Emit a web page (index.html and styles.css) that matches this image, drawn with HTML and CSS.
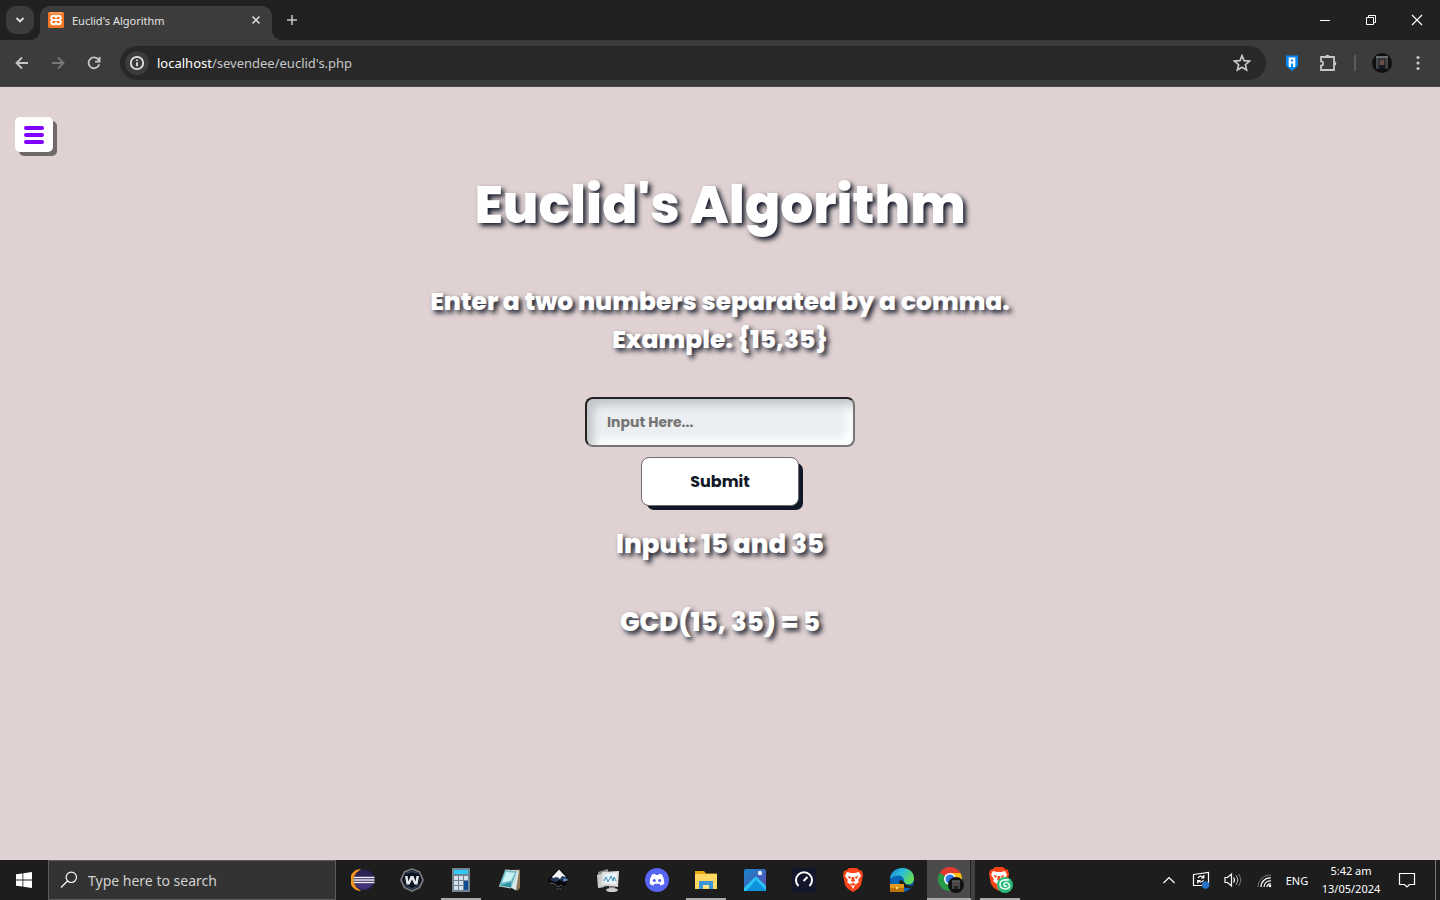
FILE: index.html
```html
<!DOCTYPE html>
<html lang="en">
<head>
<meta charset="utf-8">
<title>Euclid's Algorithm</title>
<link rel="stylesheet" href="styles.css">
</head>
<body>
<header class="browser">
  <div class="tabstrip">
    <button class="tab-search" aria-label="Search tabs"><svg width="10" height="10" viewBox="0 0 10 10"><path d="M1.500 3L5 6.500 8.500 3" class="stroke"/></svg></button>
    <div class="tab">
      <svg width="16" height="16" viewBox="0 0 16 16"><rect width="16" height="16" rx="1.500" fill="#f37623"/><path d="M1 1h14" stroke="#fbb27f"/><path d="M5.300 3.800h1.400L8 5.200l1.300-1.400h1.400a2 2 0 0 1 2 2v.7L11.500 8l1.200 1.500v.7a2 2 0 0 1-2 2H9.300L8 10.800l-1.300 1.400H5.300a2 2 0 0 1-2-2v-.7L4.500 8 3.300 6.500v-.7a2 2 0 0 1 2-2zM5.500 8h5" fill="none" stroke="#fff" stroke-width="2"/><path d="M6 5.500v1M10 5.500v1M6 9.500v1M10 9.500v1" stroke="#f37623" stroke-width="1.500"/></svg>
      <span class="tab-title">Euclid's Algorithm</span>
      <button class="tab-close" aria-label="Close tab"><svg width="10" height="10" viewBox="0 0 10 10"><path d="M1.500 1.500l7 7M8.500 1.500l-7 7" class="thin"/></svg></button>
    </div>
    <button class="new-tab" aria-label="New tab"><svg width="12" height="12" viewBox="0 0 12 12"><path d="M6 1v10M1 6h10" class="thin"/></svg></button>
    <div class="window-controls">
      <button aria-label="Minimise"><svg width="12" height="12" viewBox="0 0 12 12"><path d="M1 6.500h10" stroke="#fff"/></svg></button>
      <button aria-label="Restore"><svg width="12" height="12" viewBox="0 0 12 12"><path d="M1.500 3.500h7v7h-7zM3.500 3.500v-2h7v7h-2" fill="none" stroke="#fff"/></svg></button>
      <button aria-label="Close"><svg width="12" height="12" viewBox="0 0 12 12"><path d="M1 1l10 10M11 1L1 11" stroke="#fff" stroke-width="1.200"/></svg></button>
    </div>
  </div>
  <div class="toolbar">
    <button class="nav" aria-label="Back"><svg width="16" height="16" viewBox="0 0 16 16"><path d="M14 8H3M8 2.500L2.500 8 8 13.500" class="stroke"/></svg></button>
    <button class="nav dim" aria-label="Forward"><svg width="16" height="16" viewBox="0 0 16 16"><path d="M2 8h11M8 2.500L13.500 8 8 13.500" class="stroke"/></svg></button>
    <button class="nav" aria-label="Reload"><svg width="16" height="16" viewBox="0 0 16 16"><path d="M13.200 9.200A5.400 5.400 0 1 1 12.600 5L13.500 6.200M13.600 2v4.600H9" class="stroke"/></svg></button>
    <div class="omnibox">
      <button class="site-info" aria-label="Site information"><svg width="16" height="16" viewBox="0 0 16 16"><circle cx="8" cy="8" r="6.200" class="stroke"/><path d="M8 7.200v4M8 4.500v1.600" class="stroke"/></svg></button>
      <div class="url"><span class="host">localhost</span>/sevendee/euclid's.php</div>
      <button class="star" aria-label="Bookmark"><svg width="18" height="18" viewBox="0 0 16 16"><path d="M8 1.500l1.800 4.400 4.900.4-3.700 3.200 1.100 4.800L8 11.800l-4.100 2.500L5 9.500 1.300 6.300l4.900-.4z" class="thin"/></svg></button>
    </div>
    <button class="tool" aria-label="Password extension"><svg width="16" height="18" viewBox="0 0 16 18"><path d="M2 1.500h12v10.500l-6 5-6-5z" fill="#0789f1"/><path d="M5.800 13V4.500h4.400V13M5.500 8.500h5" fill="none" stroke="#fff" stroke-width="2.200"/></svg></button>
    <button class="tool" aria-label="Extensions"><svg width="18" height="18" viewBox="0 0 18 18"><path d="M2 3h13v13H2v-4.300a2.200 2.200 0 0 0 0-4.400z" class="stroke"/><path d="M6.200 3a2.300 2.300 0 0 1 4.600 0zM15 7.200a2.300 2.300 0 0 1 0 4.600z" fill="currentColor"/></svg></button>
    <span class="divider"></span>
    <button class="profile" aria-label="Profile"><svg width="20" height="20" viewBox="0 0 20 20"><circle cx="10" cy="10" r="10" fill="#101010"/><path d="M4 4h12v12H4z" fill="#303437"/><path d="M4 4h12" stroke="#85888a" stroke-width="1.500"/><path d="M5 5v10M15 5v10" stroke="#5b5e60"/><path d="M8 7h4v5H8z" fill="#684b43"/><path d="M7 12h6v4H7z" fill="#171b21"/></svg></button>
    <button class="menu" aria-label="Browser menu"><svg width="4" height="16" viewBox="0 0 4 16"><circle cx="2" cy="2.500" r="1.600"/><circle cx="2" cy="8" r="1.600"/><circle cx="2" cy="13.500" r="1.600"/></svg></button>
  </div>
</header>

<main class="page">
  <button class="hamburger" aria-label="Open menu"><span></span><span></span><span></span></button>
  <h1 class="title">Euclid's Algorithm</h1>
  <form class="calculator" onsubmit="return false">
    <label class="prompt" for="numbers">Enter a two numbers separated by a comma.<br>Example: {15,35}</label>
    <input class="numbers" id="numbers" type="text" placeholder="Input Here...">
    <button class="submit" type="submit">Submit</button>
  </form>
  <p class="result">Input: 15 and 35</p>
  <p class="result">GCD(15, 35) = 5</p>
</main>

<footer class="taskbar">
  <button class="start" aria-label="Start"><svg width="16" height="16" viewBox="0 0 16 16" fill="#fff"><path d="M0 2.300l6.500-.9v6.200H0zM7.300 1.300L16 0v7.600H7.300zM0 8.400h6.500v6.200L0 13.700zM7.300 8.400H16V16l-8.700-1.200z"/></svg></button>
  <label class="search" for="search"><svg width="18" height="18" viewBox="0 0 18 18"><circle cx="11.300" cy="6.300" r="5.200" class="white"/><path d="M7.500 10L1 16.500" class="white"/></svg><input id="search" type="text" placeholder="Type here to search"></label>
  <nav class="apps" aria-label="Applications">
    <button aria-label="Eclipse"><svg width="24" height="24" viewBox="0 0 24 24"><path d="M10 1a11 11 0 0 0 0 22A14 14 0 0 1 10 1z" fill="#f7941e"/><circle cx="13" cy="12" r="10.500" fill="#2c2255"/><path d="M4 16h18a10.500 10.500 0 0 1-18 0z" fill="#44337a"/><path d="M3 9.500h20.500M2.500 12h21M3 14.500h20.500" stroke="#eeeaf6" stroke-width="1.300"/></svg></button>
    <button aria-label="Wallpaper app"><svg width="24" height="24" viewBox="0 0 24 24"><path d="M12 1l7.500 3L23 12l-3.500 7.500L12 23l-7.500-3.500L1 12l3.500-8z" fill="#0c1420" stroke="#74777c" stroke-width="1.800"/><path d="M5.500 5.500L12 3.500l6.500 2M5 17l7 4 7-4" fill="none" stroke="#354660" stroke-width="1.300"/><path d="M5 8h2.500l1 5.500L10.500 8h3l2 5.500 1-5.500H19l-1.500 8.500h-3L12 11.500l-2.500 5h-3z" fill="#e5e8ed"/></svg></button>
    <button class="running" aria-label="Calculator"><svg width="18" height="24" viewBox="0 0 18 24"><path d="M0 0h18v24H0z" fill="#728493"/><path d="M2 2h14v4H2z" fill="#31c9f6"/><path d="M2 8h4v4H2zM7 8h4v4H7zM12 8h4v4h-4zM2 13h4v4H2zM7 13h4v4H7zM2 18h4v4H2zM7 18h4v4H7z" fill="#d6e0e8"/><path d="M12 13h4v9h-4z" fill="#124d93"/></svg></button>
    <button aria-label="Notepad"><svg width="24" height="24" viewBox="0 0 24 24"><path d="M7 2l15-.5V20l-3 3z" fill="#8f7654"/><path d="M7 2l14 .5-3 20-7-4z" fill="#d5e7e8"/><path d="M7 2l12 1-6 17-12-2z" fill="#69bbc7"/><path d="M8 4l9 .7-4 8-9 2z" fill="#c8f1f2"/><path d="M1 18l12-4v6z" fill="#2e929d"/><path d="M7 2l12 1M1 18l12 2" stroke="#c4c9c7"/></svg></button>
    <button aria-label="Inkscape"><svg width="24" height="24" viewBox="0 0 24 24"><path d="M12 1q2 0 9 9 3 3-1 4l-3 2h3l-3 2-2-1-1 3 3 1-5 2-5-2 3-1-1-2-4-1 1-2-4-1q-3-1 1-4 7-9 9-9z" fill="#07080a"/><path d="M12 2L21 11l-5 2-4-1-3 2-6-2z" fill="#263c61"/><path d="M12 1.500l7 7.500-4-1-2 3-3-2-4 1-1-1z" fill="#f4f4f4"/><path d="M17 10l5 2-6 2z" fill="#6689bd"/><path d="M3 15l5 1 3 3 4-2M9 21h6" fill="none" stroke="#5e6165"/></svg></button>
    <button aria-label="System monitor"><svg width="24" height="24" viewBox="0 0 24 24"><path d="M2 4l10-3v17L3 20z" fill="#87908e"/><path d="M1 7l7-2v14l-6 1z" fill="#c9ccc9"/><path d="M6 4l17-1-1 16-17-2z" fill="#ddd"/><path d="M8 6l13-1-1 11-12-1z" fill="#eaf5fa"/><path d="M8 13l2-4 2 5 3-6 2 5 1-4 2 4" fill="none" stroke="#388bb8"/><path d="M13 18l6 1v2H13z" fill="#888"/><ellipse cx="16" cy="22" rx="6" ry="2" fill="#cfcfcf"/></svg></button>
    <button aria-label="Discord"><svg width="24" height="24" viewBox="0 0 24 24"><circle cx="12" cy="12" r="12" fill="#5865f2"/><path d="M7 6.500l3-.8.800 1.200h2.400l.8-1.200 3 .8q2.500 4 2.300 9.200-2 1.500-3.800 1.700l-1-1.700h-5l-1 1.700q-2-.2-3.800-1.700Q4.500 10.500 7 6.500z" fill="#fff"/><circle cx="9.300" cy="12.500" r="1.600" fill="#5865f2"/><circle cx="14.700" cy="12.500" r="1.600" fill="#5865f2"/></svg></button>
    <button class="running" aria-label="File Explorer"><svg width="24" height="24" viewBox="0 0 24 24"><path d="M1 3h9l2 2.500h11V20H1z" fill="#e8a713"/><path d="M1 6h22v15H1z" fill="#ffd763"/><path d="M5 13h14v8h-4v-4H9v4H5z" fill="#3b95d8"/><path d="M9 17h6v3H9z" fill="#ffe58a"/></svg></button>
    <button aria-label="Photos"><svg width="24" height="24" viewBox="0 0 24 24"><defs><linearGradient id="photo" x2="1" y2="1"><stop stop-color="#1685cc"/><stop offset="1" stop-color="#634cae"/></linearGradient></defs><rect x="1" y="1" width="22" height="22" rx="2" fill="url(#photo)"/><path d="M1 20L11 10q2-2 4 0l8 8v5H1z" fill="#29c6f5"/><path d="M13 12l10 10v1H3z" fill="#0f93dc"/><circle cx="17" cy="5" r="2.200" fill="#e1edff"/></svg></button>
    <button aria-label="Speedtest"><svg width="24" height="24" viewBox="0 0 24 24"><path d="M0 0h24v24H0z" fill="#14162b"/><path d="M6.500 18a8 8 0 1 1 11 0M11.500 13l4-4" fill="none" stroke="#fff" stroke-width="2"/></svg></button>
    <button aria-label="Brave"><svg width="24" height="24" viewBox="0 0 24 24"><path d="M8 0h8l2 2 3 1 1 4-2 10-3 4-5 3-5-3-3-4L2 7l1-4 3-1z" fill="#fa451b"/><path d="M6 4l4 1h4l4-1 2 4-3 4 1 2-4 3-2 4-2-4-4-3 1-2-3-4z" fill="#fff"/><path d="M6.500 8l4 1-2 2zM17.500 8l-4 1 2 2zM11 9h2l1 4-2 1-2-1zM9 16l3-1 3 1-3 2z" fill="#fa451b"/></svg></button>
    <button aria-label="Edge"><svg width="24" height="24" viewBox="0 0 24 24"><defs><linearGradient id="edge" x2="1" y2=".5"><stop stop-color="#1781ce"/><stop offset=".5" stop-color="#29bddc"/><stop offset="1" stop-color="#66dc58"/></linearGradient></defs><circle cx="12" cy="12" r="12" fill="#0b65b4"/><path d="M0 11C1-4 24-3 24 10c0 7-8 8-10 4 1-5-5-10-14-3z" fill="url(#edge)"/><path d="M14 14q-4-4-5 0 2 7 12 6l2-3q-6 2-9-3z" fill="#202020"/><path d="M0 16h14v8H0z" fill="#bd710a"/><path d="M0 16h14v4H0z" fill="#e49b1b"/><path d="M6 19h2v2H6z" fill="#ffe092"/></svg></button>
    <button class="active" aria-label="Chrome"><svg width="26" height="26" viewBox="0 0 26 26"><path d="M12 12L1.600 6A12 12 0 0 1 22.400 6z" fill="#e33b2e"/><path d="M12 12L1.600 6A12 12 0 0 0 12 24z" fill="#279b48"/><path d="M12 12h12A12 12 0 0 1 12 24z" fill="#fbc116"/><path d="M12 6h10.400A12 12 0 0 1 24 12H12z" fill="#fbc116"/><circle cx="12" cy="12" r="6" fill="#fff"/><circle cx="12" cy="12" r="4.500" fill="#3477e6"/><circle cx="18" cy="18" r="8" fill="#111"/><path d="M14 14h8v8h-8z" fill="#44484b"/><path d="M14 14h8" stroke="#777"/><path d="M16 16h4v3h-4z" fill="#5b463f"/><path d="M16 19h4v3h-4z" fill="#202226"/></svg></button>
    <button class="running" aria-label="Brave profile"><svg width="26" height="26" viewBox="0 0 26 26"><path d="M8 0h8l2 2 3 1 1 4-2 10-3 4-5 3-5-3-3-4L2 7l1-4 3-1z" fill="#fa451b"/><path d="M6 4l4 1h4l4-1 2 4-3 4 1 2-4 3-2 4-2-4-4-3 1-2-3-4z" fill="#fff"/><path d="M6.500 8l4 1-2 2zM17.500 8l-4 1 2 2zM11 9h2l1 4-2 1-2-1z" fill="#fa451b"/><circle cx="18" cy="18" r="8" fill="#2cb77b"/><path d="M22 13q-9-1-9 4t6 5q5-1 3-5-3-3-5 0 0 3 3 2" fill="none" stroke="#e0ffef" stroke-width="1.600"/></svg></button>
  </nav>
  <div class="tray">
    <button aria-label="Show hidden icons"><svg width="14" height="10" viewBox="0 0 14 10"><path d="M1.500 8L7 2.500 12.500 8" class="white"/></svg></button>
    <button aria-label="Sync status"><svg width="18" height="18" viewBox="0 0 18 18"><path d="M1.500 3.500L16.500 1.500v13h-15z" class="white"/><path d="M6 7q2.500-3.500 5.500-.5M11.800 4v3H9M11.500 9q-2.500 3.500-5.500.7M5.700 12.500v-3h2.800" class="white"/><circle cx="13.500" cy="14" r="3.700" fill="#2875c7"/></svg></button>
    <button aria-label="Volume"><svg width="18" height="16" viewBox="0 0 18 16"><path d="M1 5.500h2.500L7.500 2v12l-4-3.500H1zM9.500 5.500q2 2.500 0 5" class="white"/><path d="M12 3.500q3.500 4.500 0 9" fill="none" stroke="#bbb"/><path d="M14.500 2q4.500 6 0 12" fill="none" stroke="#777"/></svg></button>
    <button aria-label="Network"><svg width="16" height="16" viewBox="0 0 16 16"><path d="M1 15A12 12 0 0 1 14 3" fill="none" stroke="#777"/><path d="M4 15A9 9 0 0 1 14 6M7 15a6 6 0 0 1 7-6M10 15a3 3 0 0 1 4-3" class="white"/><circle cx="13" cy="14" r="1.300" fill="#fff"/></svg></button>
    <button class="language">ENG</button>
    <button class="clock"><time datetime="2024-05-13T05:42">5:42 am<br>13/05/2024</time></button>
    <button class="notifications" aria-label="Notifications"><svg width="18" height="18" viewBox="0 0 18 18"><path d="M1.500 2.500h15v11h-5L9 16l-2.500-2.500h-5z" class="white"/></svg></button>
    <button class="desktop" aria-label="Show desktop"></button>
  </div>
</footer>
</body>
</html>
```
FILE: styles.css
```css
* { box-sizing: border-box; }
body {
  margin: 0;
  min-height: 100vh;
  display: flex;
  flex-direction: column;
  background: #e0d2d2;
  font-family: "Noto Sans", "Open Sans", sans-serif;
  font-size: 12px;
}
button {
  display: flex;
  align-items: center;
  justify-content: center;
  flex: none;
  padding: 0;
  border: 0;
  background: none;
  color: inherit;
  font: inherit;
}
svg { display: block; flex: none; }
.stroke, .thin { fill: none; stroke: currentColor; stroke-width: 1.8; }
.thin { stroke-width: 1.5; }
.white { fill: none; stroke: #fff; stroke-width: 1.2; }

.browser { background: #3c3c3c; color: #c7c7c7; }
.tabstrip { display: flex; height: 40px; padding-left: 6px; background: #202221; }
.tab-search { width: 28px; height: 28px; margin-top: 6px; border-radius: 10px; background: #3c3c3c; color: #e3e3e3; }
.tab {
  display: flex;
  align-items: center;
  gap: 8px;
  position: relative;
  width: 232px;
  height: 34px;
  margin: 6px 0 0 6px;
  padding: 0 8px 6px;
  border-radius: 10px 10px 0 0;
  background: #3c3c3c;
  color: #e3e3e3;
}
.tab::before, .tab::after {
  content: "";
  position: absolute;
  bottom: 0;
  width: 10px;
  height: 10px;
}
.tab::before { right: 100%; background: radial-gradient(circle at 0 0, #202221 10px, #3c3c3c 10px); }
.tab::after { left: 100%; background: radial-gradient(circle at 100% 0, #202221 10px, #3c3c3c 10px); }
.tab-title { flex: 1; font-size: 11px; }
.tab-close { width: 16px; height: 16px; }
.new-tab { width: 28px; height: 28px; margin: 6px 0 0 6px; }
.window-controls { display: flex; margin-left: auto; }
.window-controls button { width: 46px; height: 40px; }
.toolbar {
  display: flex;
  align-items: center;
  height: 47px;
  padding: 0 4px;
  border-bottom: 1px solid #4a4747;
}
.nav { width: 36px; height: 34px; }
.dim { color: #777; }
.omnibox {
  display: flex;
  align-items: center;
  flex: 1;
  height: 34px;
  margin-left: 8px;
  padding: 0 12px 0 5px;
  border-radius: 17px;
  background: #282828;
}
.site-info { width: 24px; height: 24px; border-radius: 12px; background: #3c3c3c; color: #e3e3e3; }
.url { flex: 1; margin-left: 8px; font-size: 13px; }
.host { color: #fff; }
.star { width: 24px; height: 24px; }
.tool { width: 36px; height: 34px; }
.omnibox + .tool { margin-left: 8px; }
.divider { width: 2px; height: 16px; margin: 0 8px; background: #5b5b5b; }
.profile { width: 36px; height: 34px; }
.menu { width: 36px; height: 34px; fill: currentColor; }

.page {
  display: flex;
  flex-direction: column;
  align-items: center;
  flex: 1;
  padding: 30px 15px;
  color: #fff;
  font-family: Poppins, Inter, sans-serif;
  font-weight: 800;
}
.hamburger {
  flex-direction: column;
  gap: 3px;
  align-self: flex-start;
  width: 38px;
  height: 35px;
  border-radius: 5px;
  background: #fff;
  box-shadow: 4px 4px 0 #706969;
}
.hamburger span { width: 20px; height: 4px; border-radius: 2px; background: #7f00ff; }
.title {
  margin: 13px 0 0;
  font-size: 52px;
  font-weight: 800;
  line-height: 80px;
  text-shadow: 3px 3px 5px #111827;
}
.calculator { display: flex; flex-direction: column; align-items: center; margin-top: 38px; }
.prompt, .result { line-height: 38px; text-align: center; text-shadow: 3px 3px 5px #111827; }
.prompt { font-size: 25px; }
.numbers {
  width: 270px;
  height: 50px;
  margin-top: 38px;
  padding: 0 20px;
  border: 2px solid;
  border-color: #222 #767676 #767676 #222;
  border-radius: 8px;
  background: #ebeff2;
  box-shadow: inset 6px 6px 10px #c0c4c7, inset -6px -6px 10px #fff;
  font: 700 14px Poppins, Inter, sans-serif;
}
.numbers::placeholder { color: #757575; opacity: 1; }
.submit {
  width: 158px;
  height: 49px;
  margin-top: 10px;
  border: 1px solid #6b6b6b;
  border-radius: 8px;
  background: #fff;
  box-shadow: 5px 5px 0 -1px #111827;
  color: #111827;
  font: 700 16px Poppins, Inter, sans-serif;
}
.result { margin: 19px 0 21px; font-size: 26px; }

.taskbar { display: flex; height: 40px; background: #1d1d1d; color: #fff; }
.start { width: 48px; }
.search {
  display: flex;
  align-items: center;
  gap: 10px;
  width: 288px;
  padding: 0 11px;
  border: 1px solid #5c5c5c;
  background: #333;
}
.search input { flex: 1; min-width: 0; padding: 0; border: 0; background: none; color: #ddd; font: 14px "Noto Sans", sans-serif; }
.search input::placeholder { color: #d0d0d0; opacity: 1; }
.apps { display: flex; gap: 1px; margin-left: 3px; }
.apps button { position: relative; width: 48px; }
.running::after, .active::after {
  content: "";
  position: absolute;
  right: 4px;
  bottom: 0;
  left: 4px;
  height: 2px;
  background: #aaa;
}
.apps .active { background: linear-gradient(90deg, #4b4b4b 43px, #222 43px 44px, #414141 44px); }
.active::after { left: 0; }
.tray { display: flex; margin-left: auto; }
.tray button { width: 32px; }
.tray .clock { width: 76px; line-height: 18px; font-size: 11px; }
.tray .language { font-size: 11px; }
.tray .notifications { width: 36px; margin-right: 10px; }
.tray .desktop { width: 5px; border-left: 1px solid #777; }
```
